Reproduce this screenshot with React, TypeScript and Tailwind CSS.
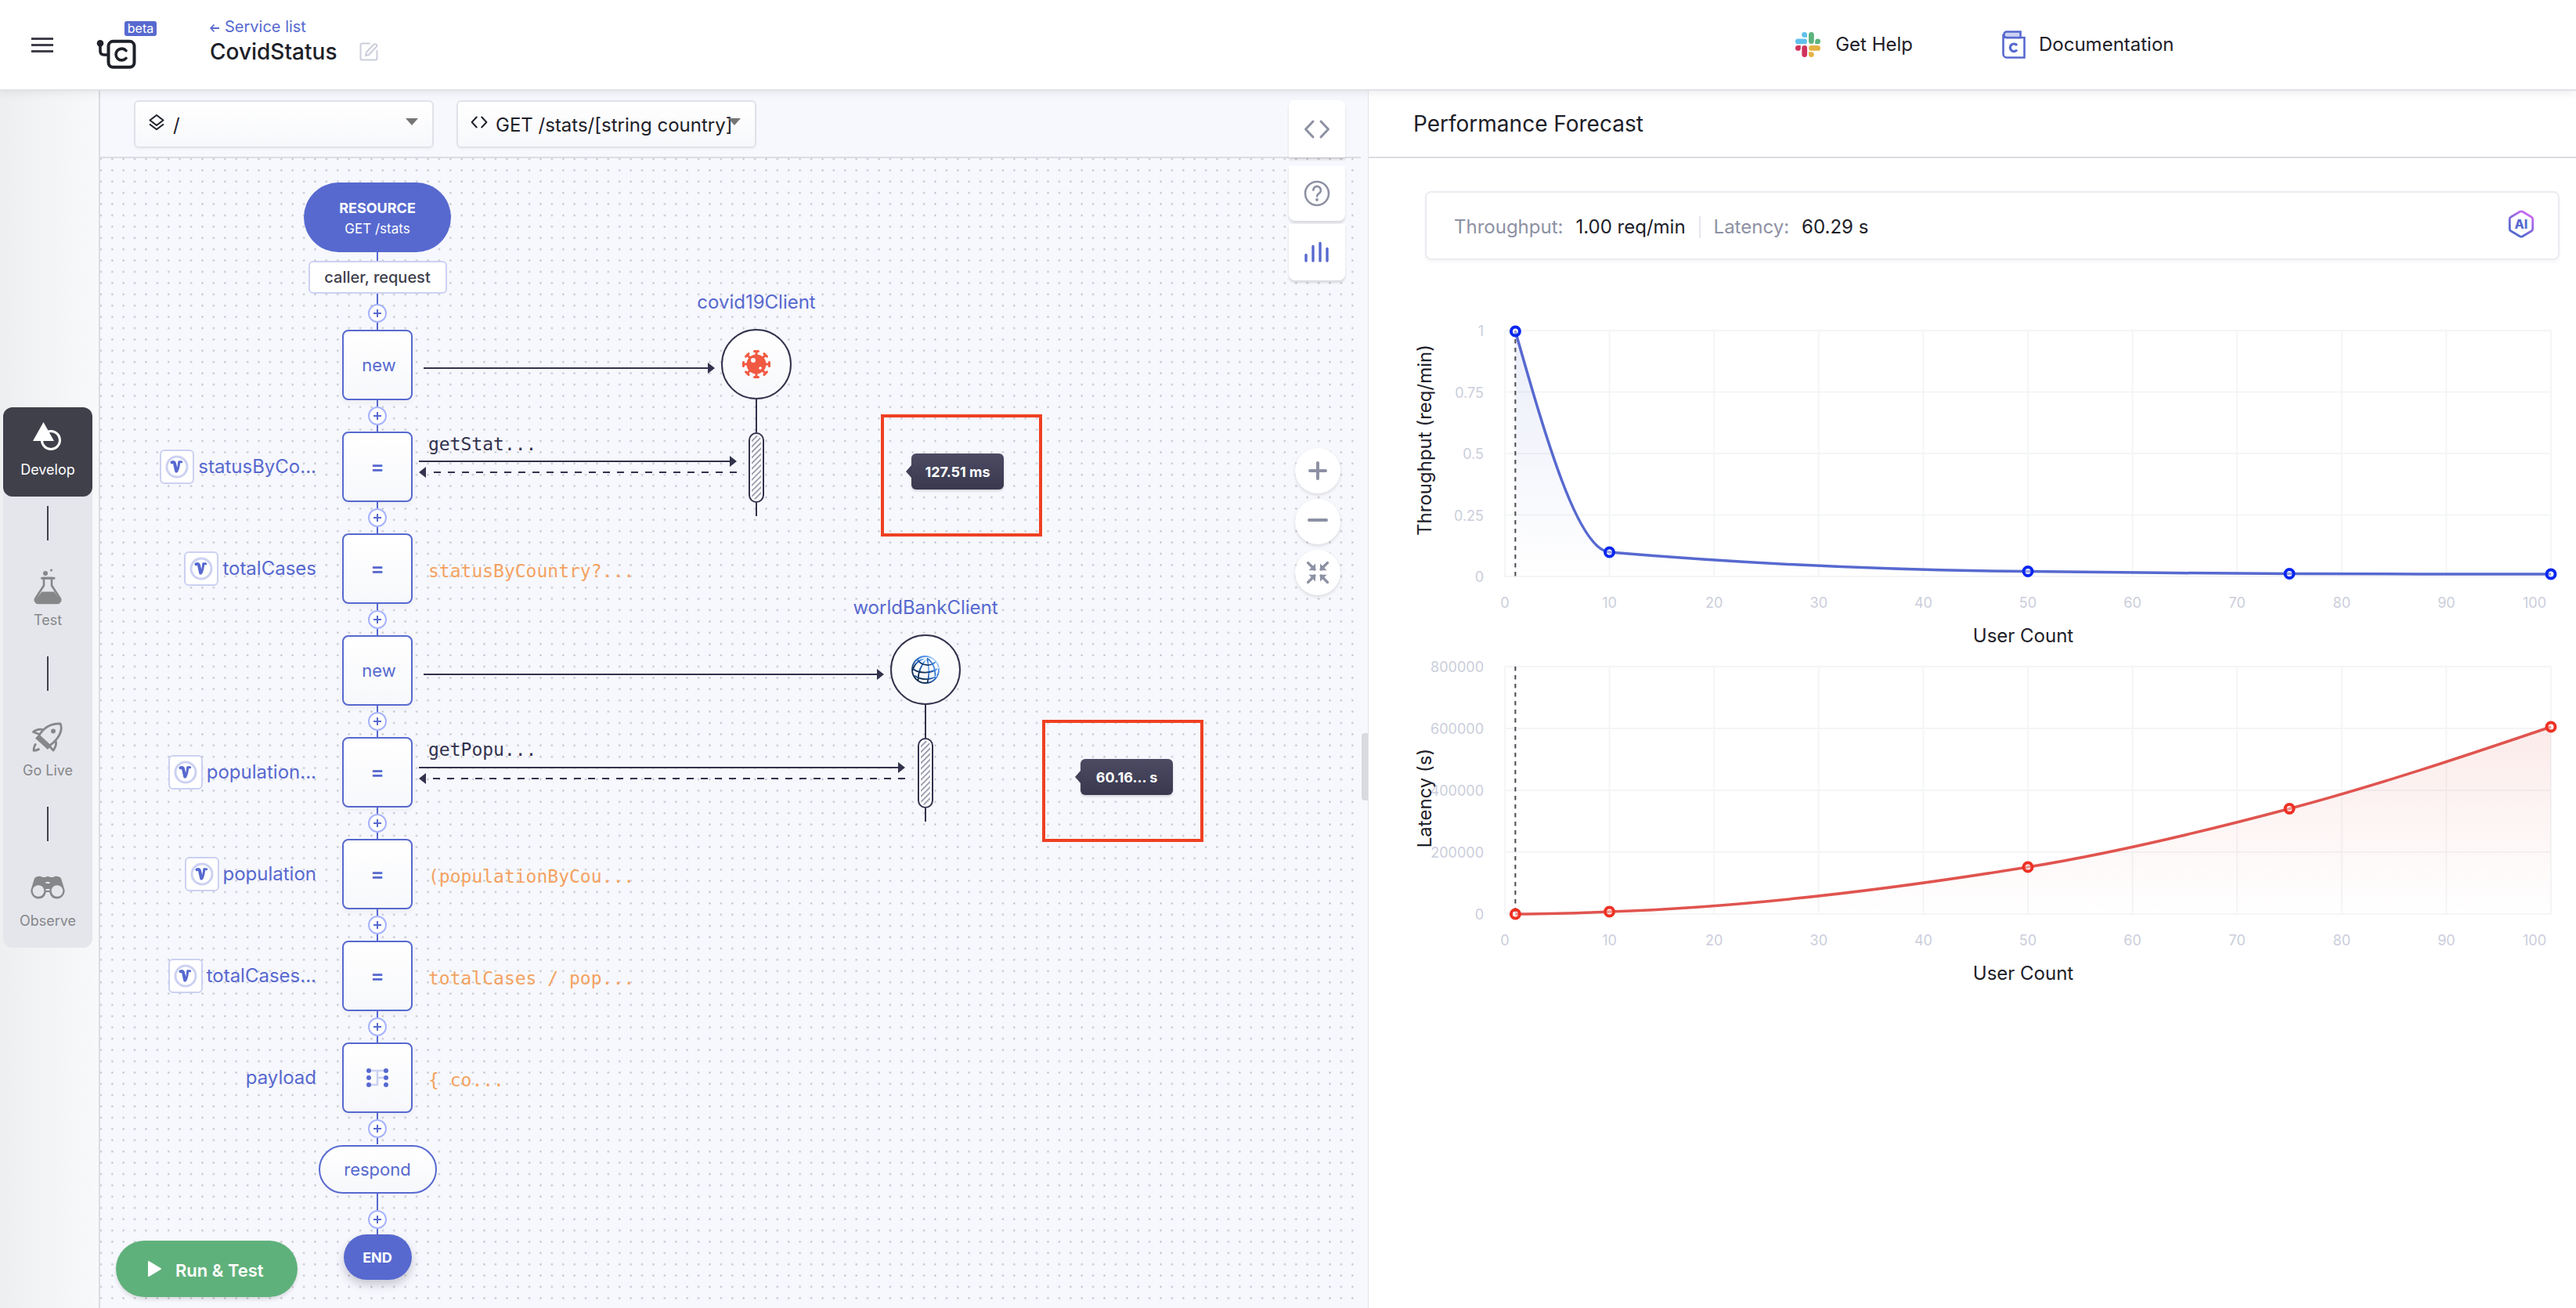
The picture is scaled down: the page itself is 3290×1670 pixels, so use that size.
import React from "react";

type Detail = { text: string; kind: "call" | "expr" };
type Step = {
  symbol: "new" | "=" | "map";
  name?: string;
  variable?: boolean;
  detail?: Detail;
};

const steps: Step[] = [
  { symbol: "new" },
  { symbol: "=", name: "statusByCo...", variable: true, detail: { text: "getStat...", kind: "call" } },
  { symbol: "=", name: "totalCases", variable: true, detail: { text: "statusByCountry?...", kind: "expr" } },
  { symbol: "new" },
  { symbol: "=", name: "population...", variable: true, detail: { text: "getPopu...", kind: "call" } },
  { symbol: "=", name: "population", variable: true, detail: { text: "(populationByCou...", kind: "expr" } },
  { symbol: "=", name: "totalCases...", variable: true, detail: { text: "totalCases / pop...", kind: "expr" } },
  { symbol: "map", name: "payload", detail: { text: "{ co...", kind: "expr" } },
];

/* ---------- icons ---------- */

function Logo() {
  return (
    <svg width="52" height="38" viewBox="123 50 52 38" fill="none" stroke="#1d2028" aria-hidden="true">
      <circle cx="128" cy="55.3" r="4.3" fill="#1d2028" stroke="none" />
      <path d="M128 56v9q0 5 5 5h5" strokeWidth="3.6" />
      <rect x="138.5" y="52.8" width="33" height="33" rx="6" strokeWidth="4" />
      <path d="M161 64.6a7.4 7.4 0 1 0 0 9.8" strokeWidth="3.6" strokeLinecap="round" />
    </svg>
  );
}

function SlackIcon() {
  return (
    <svg width="32" height="32" viewBox="0 0 32 32" aria-hidden="true">
      <g fill="#5fc1ec">
        <rect x="0" y="8.5" width="15" height="6.8" rx="3.4" />
        <path d="M15 6.8h-3.2A3.4 3.4 0 1 1 15 3.4z" />
      </g>
      <g fill="#5db37c">
        <rect x="17" y="0" width="6.8" height="15" rx="3.4" />
        <path d="M25.2 15.2v-3.4a3.4 3.4 0 1 1 3.4 3.4z" />
      </g>
      <g fill="#e5b145">
        <rect x="17" y="17" width="15" height="6.8" rx="3.4" />
        <path d="M17 25.2h3.4a3.4 3.4 0 1 1-3.4 3.4z" />
      </g>
      <g fill="#d0335c">
        <rect x="8.3" y="17" width="6.8" height="15" rx="3.4" />
        <path d="M6.8 17v3.4A3.4 3.4 0 1 1 3.4 17z" />
      </g>
    </svg>
  );
}

function DocIcon() {
  return (
    <svg width="30" height="36" viewBox="0 0 30 36" fill="none" stroke="#5769cf" aria-hidden="true">
      <path d="M1.5 5v25a4.5 4.5 0 0 0 4.500 4.500h22.500V9H5.500A4 4 0 0 1 1.500 5z" fill="#fff" strokeWidth="2.600" />
      <path d="M23.500 9V1.500H6a3.700 3.700 0 0 0 0 7.500z" fill="#ccd1f2" strokeWidth="2.600" />
      <path d="M19 19a4.800 4.800 0 1 0 0 5.600" strokeWidth="3.200" />
    </svg>
  );
}

function EditIcon() {
  return (
    <svg width="24" height="24" viewBox="0 0 24 24" fill="none" stroke="#cbcedb" strokeWidth="2" aria-hidden="true">
      <path d="M13 1.5H3.5a2 2 0 0 0-2 2v17a2 2 0 0 0 2 2h17a2 2 0 0 0 2-2V11" strokeLinecap="round" />
      <path d="M20.2 2.2a2 2 0 0 1 1.6 3.4L12 16l-4 1 .8-4.2L18.4 2.8a2.4 2.4 0 0 1 1.8-.6z" strokeLinejoin="round" />
    </svg>
  );
}

function DevelopIcon() {
  return (
    <svg width="38" height="36" viewBox="0 0 38 36" aria-hidden="true">
      <circle cx="23" cy="23" r="11.5" fill="none" stroke="#fff" strokeWidth="3" />
      <path d="M13.5 0 27 24H0z" fill="#fff" />
    </svg>
  );
}

function TestIcon() {
  return (
    <svg width="36" height="46" viewBox="0 0 36 46" fill="none" aria-hidden="true">
      <circle cx="15" cy="6" r="3" fill="#868789" />
      <circle cx="22.5" cy="2" r="1.6" fill="#868789" />
      <path d="M10.5 12.3h15.5" stroke="#868789" strokeWidth="3" strokeLinecap="round" />
      <path d="M13 12v9.5L2.5 37.8A4 4 0 0 0 6 44h24a4 4 0 0 0 3.5-6.2L23 21.500V12z" stroke="#868789" strokeWidth="2.6" />
      <path d="M10.500 29.500h15.500l8.500 11-3 4.500H4.500l-3-4.500z" fill="#868789" />
    </svg>
  );
}

function RocketIcon() {
  return (
    <svg width="40" height="38" viewBox="0 0 40 38" fill="none" stroke="#868789" strokeWidth="2.8" strokeLinejoin="round" aria-hidden="true">
      <path d="M8.500 17.500C14 8 22 1.500 36 1.800 40 10 34 22 21.500 30.500" />
      <path d="M8 18 21.500 31" />
      <path d="M4.500 20.500 20 34.500l4-4.500L9 16z" fill="#868789" strokeWidth="1" />
      <path d="M14 9.500C8 8.200 5 9.500 1.500 12.500L9 15.500" />
      <path d="M30.500 24.500c.5 5-1 8.500-3.500 11.500L22.500 31" />
      <path d="M5 27.500c-2 2-2.800 5-3 8.800 3 0 5-.6 7.500-2.300" />
      <circle cx="27" cy="11.500" r="3" fill="#868789" stroke="none" />
    </svg>
  );
}

function BinocularsIcon() {
  return (
    <svg width="44" height="30" viewBox="0 0 44 30" aria-hidden="true">
      <path d="M5 3.500C7 .500 12.500-.200 15 2h4c1-1.500 5-1.500 6 0h4c2.500-2.200 8-1.500 10 1.500L43.500 18c.800 5-3 11.500-9.500 11.500-5.500 0-9-3.500-9.700-8.500h-4.600c-.7 5-4.200 8.500-9.700 8.500C3.500 29.500-.300 23 .5 18z" fill="#868789" />
      <circle cx="10" cy="19.500" r="7.300" fill="#e5e6ec" />
      <circle cx="34" cy="19.500" r="7.300" fill="#e5e6ec" />
      <rect x="19.500" y="8" width="5" height="2" fill="#e5e6ec" />
      <rect x="19.500" y="17" width="5" height="2" fill="#e5e6ec" />
    </svg>
  );
}

function LayersIcon() {
  return (
    <svg width="22" height="22" viewBox="0 0 22 22" fill="none" stroke="#1d2028" strokeWidth="2" strokeLinejoin="round" aria-hidden="true">
      <path d="M11 2 19.500 8.500 11 15 2.500 8.500z" />
      <path d="M2 13.500 11 20.300l9-6.800" />
    </svg>
  );
}

function AngleIcon({ size, width, color }: { size: number; width: number; color: string }) {
  return (
    <svg width={size} height={size} viewBox="0 0 34 34" fill="none" stroke={color} strokeWidth={width} strokeLinecap="round" strokeLinejoin="round" aria-hidden="true">
      <path d="M12 7 2.500 17 12 27" />
      <path d="M22 7l9.500 10L22 27" />
    </svg>
  );
}

function HelpIcon() {
  return (
    <svg width="34" height="34" viewBox="0 0 34 34" fill="none" stroke="#8d91a3" strokeWidth="2.600" aria-hidden="true">
      <circle cx="17" cy="17" r="15" />
      <path d="M12.300 12.800a4.800 4.800 0 1 1 7.400 4c-1.700 1.100-2.600 1.800-2.600 3.800" strokeLinecap="round" />
      <circle cx="17" cy="25" r="1.900" fill="#8d91a3" stroke="none" />
    </svg>
  );
}

function BarsIcon() {
  return (
    <svg width="32" height="28" viewBox="0 0 32 28" stroke="#5769cf" strokeWidth="3.400" strokeLinecap="round" aria-hidden="true">
      <path d="M2 17.500V25M11 6.500V25M20 2.500V25M29 9.500V25" />
    </svg>
  );
}

function ShrinkIcon() {
  return (
    <svg width="28" height="28" viewBox="0 0 28 28" fill="none" stroke="#8d91a3" strokeWidth="3.200" aria-hidden="true">
      <path d="M1.500 1.500 10 10M26.500 1.500 18 10M1.500 26.500 10 18M26.500 26.500 18 18" strokeLinecap="round" />
      <path d="M11 2.500 11.200 11.200H2.500zM17 2.500v8.700h8.500zM11 25.500v-8.700H2.500zM17 25.500v-8.700h8.500z" fill="#8d91a3" stroke="none" />
    </svg>
  );
}

function VariableIcon() {
  return (
    <svg width="30" height="30" viewBox="0 0 30 30" fill="none" aria-hidden="true">
      <circle cx="15" cy="15" r="13" stroke="#ccd1f2" strokeWidth="3" />
      <path d="M8.500 9.300c2.200-.9 3.300 0 3.700 2l2 9.200" stroke="#5769cf" strokeWidth="4" strokeLinecap="round" strokeLinejoin="round" />
      <path d="M14.800 20.800c2-3.500 2.700-7.500 2.900-12h3" stroke="#5769cf" strokeWidth="3" strokeLinecap="round" strokeLinejoin="round" />
    </svg>
  );
}

function MapIcon() {
  const rows = [3, 12, 21];
  return (
    <svg width="28" height="24" viewBox="0 0 28 24" aria-hidden="true">
      <path d="M3 3h22M14 12h11M3 21h11V3" fill="none" stroke="#ccd1f2" strokeWidth="2.600" />
      {rows.map((y) => (
        <g key={y} fill="#5769cf">
          <circle cx="3" cy={y} r="3" />
          <circle cx="25" cy={y} r="3" />
        </g>
      ))}
    </svg>
  );
}

function VirusIcon() {
  const angles = [0, 45, 90, 135, 180, 225, 270, 315];
  return (
    <svg width="38" height="38" viewBox="-19 -19 38 38" aria-hidden="true">
      {angles.map((a) => (
        <g key={a} transform={`rotate(${a})`} stroke="#f05a43" strokeWidth="3" strokeLinecap="round">
          <path d="M0-10v-6M-2.500-16.500h5" />
        </g>
      ))}
      <circle r="12.500" fill="#f05a43" />
      <circle cx="-4" cy="-5" r="3" fill="#fff" />
      <circle cx="5" cy="5" r="1.800" fill="#fff" />
    </svg>
  );
}

function GlobeIcon() {
  return (
    <svg width="38" height="38" viewBox="0 0 38 38" fill="none" aria-hidden="true">
      <defs>
        <linearGradient id="globe" x1="0" y1="1" x2="0.900" y2="0.100">
          <stop offset="0.150" stopColor="#0b2440" />
          <stop offset="0.600" stopColor="#2367c4" />
          <stop offset="0.850" stopColor="#5c9df0" />
          <stop offset="1" stopColor="#eaf3ff" />
        </linearGradient>
      </defs>
      <g stroke="url(#globe)" strokeWidth="1.800">
        <circle cx="19" cy="19" r="17" />
        <path d="M21 4.500C14 12 9.500 22 9.500 33" />
        <path d="M21 4.500c3 9 3.500 20 .5 31.500" />
        <path d="M21 4.500c8 5 11 13 10.500 25" />
        <path d="M21 4.500C12 5 5 11 2.500 20" />
        <path d="M9 6.500c5 7.500 17 9 23.500 2" />
        <path d="M2.500 17.500c8 7 25 7 33.500-1.500" />
        <path d="M5 26.500c8 6 20 6 28.500.5" />
      </g>
    </svg>
  );
}

function AiIcon() {
  return (
    <svg width="34" height="36" viewBox="0 0 34 36" aria-hidden="true">
      <defs>
        <linearGradient id="ai" x1="0.200" y1="1" x2="0.800" y2="0">
          <stop offset="0.200" stopColor="#5769cf" />
          <stop offset="0.900" stopColor="#c46af0" />
        </linearGradient>
      </defs>
      <path d="M15.300 2.300a3.500 3.500 0 0 1 3.400 0L30 9a3 3 0 0 1 1.700 2.700v12.600A3 3 0 0 1 30 27l-11.300 6.700a3.500 3.500 0 0 1-3.400 0L4 27a3 3 0 0 1-1.700-2.700V11.700A3 3 0 0 1 4 9z" fill="none" stroke="url(#ai)" strokeWidth="2.800" />
      <text x="17" y="24" textAnchor="middle" fontSize="16" fontWeight="800" fill="#5769cf">AI</text>
    </svg>
  );
}

/* ---------- page frame ---------- */

function Header() {
  return (
    <header className="relative z-20 flex h-[116px] shrink-0 items-center border-b-2 border-[#e1e2e8] bg-white pl-10 shadow-[0_4px_10px_rgba(0,0,0,0.06)]">
      <button aria-label="Menu" className="flex w-7 flex-col gap-[5px]">
        <span className="h-[3px] bg-[#40404b]" />
        <span className="h-[3px] bg-[#40404b]" />
        <span className="h-[3px] bg-[#40404b]" />
      </button>
      <div className="ml-[55px] flex w-[77px] flex-col gap-1">
        <span className="flex h-[19px] w-[41px] items-center justify-center self-end rounded-[3px] bg-[#5769cf] text-[16px] leading-none text-white">beta</span>
        <Logo />
      </div>
      <div className="ml-[68px] flex flex-col self-start pt-5">
        <a href="#services" className="flex items-center gap-[7px] text-[20px] leading-7 text-[#5769cf]">
          <svg width="12" height="12" viewBox="0 0 12 12" fill="none" stroke="#5769cf" strokeWidth="1.800" className="mt-1" aria-hidden="true">
            <path d="M12 6H1.500M5.500 1.500 1.200 6l4.300 4.500" />
          </svg>
          Service list
        </a>
        <div className="flex items-center gap-[29px]">
          <h1 className="text-[28px] font-medium leading-9 text-[#1d2028]">CovidStatus</h1>
          <button aria-label="Rename service"><EditIcon /></button>
        </div>
      </div>
      <nav className="mr-[15.8%] ml-auto flex items-center gap-[114px] text-[24px] text-[#1d2028]">
        <a href="#help" className="flex items-center gap-[19px]">
          <SlackIcon />
          Get Help
        </a>
        <a href="#docs" className="flex items-center gap-[17px]">
          <DocIcon />
          Documentation
        </a>
      </nav>
    </header>
  );
}

const stages = [
  { label: "Develop", icon: <DevelopIcon />, active: true },
  { label: "Test", icon: <TestIcon />, active: false },
  { label: "Go Live", icon: <RocketIcon />, active: false },
  { label: "Observe", icon: <BinocularsIcon />, active: false },
];

function Sidebar() {
  return (
    <aside className="flex w-[128px] shrink-0 flex-col items-start justify-center border-r-2 border-[#dcdde3] bg-linear-to-r from-[#eeeff1] to-[#f8f9fb] pb-14 pl-1">
      <nav className="flex w-[114px] flex-col items-center rounded-xl bg-[#e5e6ec]">
        {stages.map((s, i) => (
          <React.Fragment key={s.label}>
            {i > 0 && <span className="mt-3 mb-[22px] h-11 w-[2px] bg-[#40404b]" />}
            <button
              className={
                s.active
                  ? "flex h-[114px] w-full flex-col items-center rounded-xl bg-[#40404b] text-white"
                  : "flex h-[114px] w-full flex-col items-center text-[#868789]"
              }
            >
              <span className="flex h-[70px] items-center pt-1">{s.icon}</span>
              <span className="text-[18px] leading-5">{s.label}</span>
            </button>
          </React.Fragment>
        ))}
      </nav>
    </aside>
  );
}

function Picker({ label, value, icon }: { label: string; value: string; icon: React.ReactNode }) {
  return (
    <div className="relative flex h-[61px] w-[383px] items-center">
      <select aria-label={label} className="h-full w-full appearance-none rounded-md border-2 border-[#e0e2e9] bg-linear-to-b from-white to-[#f7f8fb] pt-1 pl-12 text-[24px] text-[#1d2028] shadow-[0_2px_2px_rgba(0,0,0,0.03)]">
        <option>{value}</option>
      </select>
      <span className="pointer-events-none absolute left-[18px] mb-1">{icon}</span>
      <svg width="16" height="9" viewBox="0 0 16 9" className="pointer-events-none absolute right-5 mb-[6px]" aria-hidden="true">
        <path d="M0 0h16L8 9z" fill="#757575" />
      </svg>
    </div>
  );
}

function Toolbar() {
  return (
    <div className="flex h-[86px] shrink-0 items-center gap-[29px] border-b-2 border-[#dcdde3] pl-[43px]">
      <Picker label="Resource path" value="/" icon={<LayersIcon />} />
      <Picker label="Resource function" value="GET /stats/[string country]" icon={<AngleIcon size={22} width={3} color="#1d2028" />} />
    </div>
  );
}

/* ---------- flow diagram ---------- */

function AddStep() {
  return (
    <button aria-label="Add step" className="flex size-6 items-center justify-center rounded-full border-2 border-[#a6b3ff] bg-white">
      <svg width="10" height="10" viewBox="0 0 10 10" stroke="#5769cf" strokeWidth="2" aria-hidden="true">
        <path d="M5 0v10M0 5h10" />
      </svg>
    </button>
  );
}

function Link({ className }: { className: string }) {
  return <span className={`w-[2px] bg-[#5769cf] ${className}`} />;
}

function StepRow({ step }: { step: Step }) {
  return (
    <>
      <div className="grid h-[90px] w-[708px] grid-cols-[1fr_90px_1fr]">
        <div className="flex items-center justify-end gap-[5px] pr-[33px] text-[24px] text-[#5769cf]">
          {step.variable && (
            <span className="flex size-11 items-center justify-center rounded-md border-2 border-[#ccd1f2] bg-white">
              <VariableIcon />
            </span>
          )}
          {step.name}
        </div>
        <button className="flex items-center justify-center rounded-lg border-2 border-[#5769cf] bg-linear-to-b from-white to-[#f7f8fb] text-[#5769cf] shadow-[0_4px_6px_rgba(0,0,0,0.04)]">
          {step.symbol === "new" && <span className="pl-1 text-[22px]">new</span>}
          {step.symbol === "=" && <span className="text-[26px] font-semibold leading-none">=</span>}
          {step.symbol === "map" && <MapIcon />}
        </button>
        <div className="pl-5 font-['DejaVu_Sans_Mono',monospace] text-[23px] leading-8">
          {step.detail?.kind === "expr" && <span className="block pt-8 text-[#f4a261]">{step.detail.text}</span>}
          {step.detail?.kind === "call" && <span className="block text-[#32324d]">{step.detail.text}</span>}
        </div>
      </div>
      <Link className="h-2" />
      <AddStep />
      <Link className="h-2" />
    </>
  );
}

function Flow() {
  return (
    <div className="relative flex w-[708px] flex-col items-center pt-[31px]">
      <div className="flex h-[89px] w-[188px] flex-col items-center justify-center rounded-full bg-[#5769cf] pt-1 text-white">
        <span className="text-[18px] font-bold leading-6">RESOURCE</span>
        <span className="text-[17px] leading-7">GET /stats</span>
      </div>
      <Link className="h-[11px]" />
      <div className="flex h-[42px] w-[177px] items-center justify-center rounded-md border-2 border-[#ccd1f2] bg-white text-[20px] font-medium text-[#40404b]">
        caller, request
      </div>
      <Link className="h-[13px]" />
      <AddStep />
      <Link className="h-[9px]" />
      {steps.map((s, i) => (
        <StepRow key={i} step={s} />
      ))}
      <div className="mt-px flex h-[62px] w-[151px] items-center justify-center rounded-full border-2 border-[#5769cf] bg-linear-to-b from-white to-[#f7f8fb] text-[22px] text-[#5769cf]">
        respond
      </div>
      <Link className="h-[21px]" />
      <AddStep />
      <Link className="h-[7px]" />
      <div className="flex h-[58px] w-[87px] items-center justify-center rounded-full bg-[#5769cf] text-[18px] font-bold text-white shadow-[0_6px_12px_rgba(50,50,80,0.25)]">
        END
      </div>
    </div>
  );
}

function Arrow({ x1, x2, y }: { x1: number; x2: number; y: number }) {
  return (
    <g>
      <path d={`M${x1} ${y}H${x2 - 6}`} stroke="#32324d" strokeWidth="2" />
      <path d={`M${x2} ${y}l-9-7v14z`} fill="#32324d" />
    </g>
  );
}

function ReturnArrow({ x1, x2, y }: { x1: number; x2: number; y: number }) {
  return (
    <g>
      <path d={`M${x2} ${y}H${x1 + 10}`} stroke="#32324d" strokeWidth="2" strokeDasharray="9 9" />
      <path d={`M${x1} ${y}l9-7v14z`} fill="#32324d" />
    </g>
  );
}

function CanvasDrawing() {
  return (
    <svg className="absolute inset-0 size-full" aria-hidden="true">
      <defs>
        <pattern id="dots" x="-6.300" y="-6.200" width="14.400" height="14.400" patternUnits="userSpaceOnUse">
          <rect x="6.200" y="6.200" width="2" height="2" fill="#b4b6bf" />
        </pattern>
      </defs>
      <rect width="100%" height="100%" fill="url(#dots)" />
      <Arrow x1={413} x2={785} y={268} />
      <Arrow x1={407} x2={813} y={387} />
      <ReturnArrow x1={407} x2={813} y={401} />
      <Arrow x1={413} x2={1001} y={659} />
      <Arrow x1={407} x2={1028} y={778} />
      <ReturnArrow x1={407} x2={1028} y={792} />
    </svg>
  );
}

function Client({ name, icon, className }: { name: string; icon: React.ReactNode; className: string }) {
  return (
    <div className={`absolute flex w-[240px] flex-col items-center ${className}`}>
      <span className="mb-5 text-[24px] leading-7 text-[#5769cf]">{name}</span>
      <div className="flex size-[90px] items-center justify-center rounded-full border-2 border-[#32324d] bg-linear-to-b from-white to-[#f7f8fb]">
        {icon}
      </div>
      <span className="h-[42px] w-[2px] bg-[#32324d]" />
      <svg width="20" height="90" viewBox="0 0 20 90" aria-hidden="true">
        <defs>
          <pattern id="hatch" width="5" height="5" patternUnits="userSpaceOnUse" patternTransform="rotate(45)">
            <rect width="1.600" height="5" fill="#8a8aa0" />
          </pattern>
        </defs>
        <rect x="1" y="1" width="18" height="88" rx="9" fill="#fff" stroke="#32324d" strokeWidth="2" />
        <rect x="4" y="4" width="12" height="82" rx="6" fill="url(#hatch)" />
      </svg>
      <span className="h-[17px] w-[2px] bg-[#32324d]" />
    </div>
  );
}

function Timing({ text, className }: { text: string; className: string }) {
  return (
    <div className={`absolute flex h-[156px] w-[206px] border-4 border-[#ef4023] pt-[46px] ${className}`}>
      <svg width="7" height="16" viewBox="0 0 7 16" className="mt-[15px]" aria-hidden="true">
        <path d="M7 0v16L0 8z" fill="#43425a" />
      </svg>
      <span className="flex h-[46px] w-[118px] items-center justify-center rounded-md bg-linear-to-b from-[#4c4b63] to-[#39384f] text-[18px] font-bold text-white shadow-[0_2px_3px_rgba(0,0,0,0.15)]">
        {text}
      </span>
    </div>
  );
}

function Canvas() {
  return (
    <div className="relative flex-1 overflow-hidden">
      <div className="absolute inset-y-0 left-0 right-[9px]">
        <CanvasDrawing />
      </div>
      <Flow />
      <Client name="covid19Client" icon={<VirusIcon />} className="left-[718px] top-[170px]" />
      <Client name="worldBankClient" icon={<GlobeIcon />} className="left-[934px] top-[560px]" />
      <Timing text="127.51 ms" className="left-[997px] top-[327px] pl-7" />
      <Timing text="60.16... s" className="left-[1203px] top-[717px] pl-[38px]" />
      <button className="absolute bottom-[14px] left-5 flex h-[72px] w-[232px] items-center gap-[18px] rounded-full bg-[#5fb17b] pt-1 pl-[41px] text-[22px] font-semibold text-white shadow-[0_3px_5px_rgba(0,0,0,0.12)]">
        <svg width="17" height="20" viewBox="0 0 17 20" fill="#fff" stroke="#fff" strokeWidth="2" strokeLinejoin="round" className="mb-1" aria-hidden="true">
          <path d="M1 1v18l15-9z" />
        </svg>
        Run &amp; Test
      </button>
    </div>
  );
}

function SideTools() {
  const tool = "flex w-full items-center justify-center bg-white shadow-[0_3px_3px_rgba(0,0,0,0.12)]";
  const zoom = "flex size-[58px] items-center justify-center rounded-full bg-white shadow-[0_2px_4px_rgba(0,0,0,0.12)]";
  return (
    <div className="absolute top-3 right-[29px] flex w-[72px] flex-col items-center">
      <button aria-label="Source" className={`${tool} h-[73px] rounded-t-lg`}><AngleIcon size={34} width={3} color="#8d91a3" /></button>
      <button aria-label="Help" className={`${tool} mt-[11px] h-[70px] rounded-b-lg`}><HelpIcon /></button>
      <button aria-label="Performance" className={`${tool} mt-1 h-[72px] rounded-b-lg`}><BarsIcon /></button>
      <div className="mt-[214px] flex flex-col gap-[7px] pl-[2px]">
        <button aria-label="Zoom in" className={zoom}>
          <svg width="24" height="24" viewBox="0 0 24 24" stroke="#8d91a3" strokeWidth="4" strokeLinecap="round" aria-hidden="true"><path d="M12 2v20M2 12h20" /></svg>
        </button>
        <button aria-label="Zoom out" className={zoom}>
          <svg width="26" height="24" viewBox="0 0 26 24" stroke="#8d91a3" strokeWidth="4" strokeLinecap="round" aria-hidden="true"><path d="M2 10h22" /></svg>
        </button>
        <button aria-label="Fit to screen" className={zoom}><ShrinkIcon /></button>
      </div>
    </div>
  );
}

/* ---------- performance panel ---------- */

type ChartProps = {
  id: string;
  title: string;
  titleY: number;
  ticks: string[];
  line: string;
  points: [number, number][];
  stroke: string;
  ring: string;
  gridStep: number;
};

function Chart({ id, title, titleY, ticks, line, points, stroke, ring, gridStep }: ChartProps) {
  const left = 174;
  const right = 1510;
  const top = 20;
  const bottom = top + gridStep * 4;
  const stepX = (right - left) / 10;
  const marker = left + stepX / 10;
  const columns = Array.from({ length: 11 }, (_, i) => i);
  return (
    <svg viewBox="0 0 1542 429" className="block h-auto w-full" role="img" aria-label={`${title} by user count`}>
      <defs>
        <linearGradient id={id} x1="0" y1="0" x2="0" y2="1">
          <stop offset="0" stopColor={stroke} stopOpacity="0.120" />
          <stop offset="1" stopColor={stroke} stopOpacity="0" />
        </linearGradient>
      </defs>
      <g stroke="#f4f5f6" strokeWidth="2">
        {columns.map((i) => (
          <path key={i} d={`M${left + i * stepX} ${top}V${bottom}`} />
        ))}
        {ticks.map((t, i) => (
          <path key={t} d={`M${left} ${top + i * gridStep}H${right}`} />
        ))}
      </g>
      <path d={`${line}V${bottom}H${marker}z`} fill={`url(#${id})`} />
      <path d={`M${marker} ${top}V${bottom}`} stroke="#4a4a52" strokeWidth="2" strokeDasharray="5.500 5.500" />
      <path d={line} fill="none" stroke={stroke} strokeWidth="3.500" />
      {points.map(([x, y]) => (
        <circle key={x} cx={x} cy={y} r="5.500" fill="#fff" fillOpacity="0.400" stroke={ring} strokeWidth="4" />
      ))}
      <g fill="#cbcedb" fontSize="18">
        {ticks.map((t, i) => (
          <text key={t} x="147" y={top + i * gridStep + 7} textAnchor="end">{t}</text>
        ))}
        {columns.map((i) => (
          <text key={i} x={i === 10 ? right - 6 : left + i * stepX} y={bottom + 40} textAnchor={i === 10 ? "end" : "middle"}>
            {i * 10}
          </text>
        ))}
      </g>
      <g fill="#1d2028" fontSize="24" textAnchor="middle">
        <text x="836" y={bottom + 84}>User Count</text>
        <text transform={`translate(80 ${top + titleY}) rotate(-90)`}>{title}</text>
      </g>
    </svg>
  );
}

function Performance() {
  return (
    <section className="flex w-[46.9%] shrink-0 flex-col border-l border-[#e3e5ec] bg-white">
      <h2 className="flex h-[86px] items-center border-b-2 border-[#dcdde3] pl-[57px] text-[28px] leading-9 text-[#1d2028]">
        Performance Forecast
      </h2>
      <div className="mt-[42px] mr-[21px] ml-[72px] flex h-[88px] items-center rounded-lg border-2 border-[#ebecf1] pt-1 pr-[30px] pl-[35px] text-[24px] text-[#1d2028] shadow-[0_3px_4px_rgba(0,0,0,0.04)]">
        <span className="text-[#8d91a3]">Throughput:</span>
        <span className="ml-4">1.00 req/min</span>
        <span className="mx-[17px] h-7 w-[2px] bg-[#e6e7ec]" />
        <span className="text-[#8d91a3]">Latency:</span>
        <span className="ml-4">60.29 s</span>
        <span className="mb-2 ml-auto"><AiIcon /></span>
      </div>
      <div className="mt-[70px] flex flex-col">
        <Chart
          id="throughput"
          title="Throughput (req/min)"
          titleY={140}
          ticks={["1", "0.75", "0.5", "0.25", "0"]}
          gridStep={78.5}
          line="M187.400 21C227 160 267.500 300 307.500 303C485 318 663 326 842 327.500C953 329 1065 330 1176 330.500C1287 331 1399 331 1510 331"
          points={[[187.4, 21], [307.5, 303], [842, 327.5], [1176, 330.5], [1510, 331]]}
          stroke="#5769cf"
          ring="#0a27f0"
        />
        <Chart
          id="latency"
          title="Latency (s)"
          titleY={168}
          ticks={["800000", "600000", "400000", "200000", "0"]}
          gridStep={79}
          line="M187.400 336C227 335.500 267 335 307.500 333C485 327 664 305 842 276C953 258 1065 231 1176 201.500C1287 172 1398 135 1510 97"
          points={[[187.4, 336], [307.5, 333], [842, 276], [1176, 201.5], [1510, 97]]}
          stroke="#e0544f"
          ring="#ee3124"
        />
      </div>
    </section>
  );
}

export default function App() {
  return (
    <div className="flex min-h-screen flex-col bg-[#f7f8fd] font-['Inter',sans-serif]">
      <Header />
      <div className="flex flex-1">
        <Sidebar />
        <main className="relative flex min-w-0 flex-1 flex-col">
          <div className="mr-[9px] flex flex-col">
            <Toolbar />
          </div>
          <Canvas />
          <SideTools />
          <button aria-label="Resize panel" className="absolute right-0 top-[820px] h-[86px] w-2 rounded-l bg-[#d8dade]" />
        </main>
        <Performance />
      </div>
    </div>
  );
}
